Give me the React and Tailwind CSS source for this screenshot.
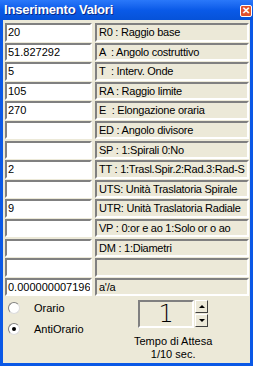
import React from 'react';

const rows = [
  ['20', 'R0 : Raggio base'],
  ['51.827292', 'A  : Angolo costruttivo'],
  ['5', 'T  : Interv. Onde'],
  ['105', 'RA : Raggio limite'],
  ['270', 'E  : Elongazione oraria'],
  ['', 'ED : Angolo divisore'],
  ['', 'SP : 1:Spirali 0:No'],
  ['2', 'TT : 1:Trasl.Spir.2:Rad.3:Rad-S'],
  ['', 'UTS: Unità Traslatoria Spirale'],
  ['9', 'UTR: Unità Traslatoria Radiale'],
  ['', 'VP : 0:or e ao 1:Solo or o ao'],
  ['', 'DM : 1:Diametri'],
  ['', ''],
  ['0.000000007196', "a'/a"],
];

const sunken =
  'border-2 border-t-[#808080] border-l-[#808080] border-b-white border-r-white';

function Radio({ checked, label }) {
  return (
    <div className="flex items-center h-[21px]">
      <span className="w-[12px] h-[12px] rounded-full bg-white border border-t-[#808080] border-l-[#808080] border-b-[#dcdcdc] border-r-[#dcdcdc] flex items-center justify-center">
        {checked && <span className="w-[4px] h-[4px] rounded-full bg-black" />}
      </span>
      <span className="ml-[14px]">{label}</span>
    </div>
  );
}

export default function App() {
  return (
    <div
      className="w-[253px] h-[366px] flex flex-col bg-[#0a58e6] text-[11px] text-black"
      style={{ fontFamily: '"Liberation Sans", Arial, sans-serif' }}
    >
      {/* title bar */}
      <div className="h-[20px] flex items-center justify-between pl-[4px] pr-[1px] bg-gradient-to-b from-[#2a78fa] via-[#0a5ae8] to-[#0652d8]">
        <span className="text-white font-bold text-[13px] tracking-[-0.2px] [text-shadow:1px_1px_0_#0a2a8a]">
          Inserimento Valori
        </span>
        <span className="w-[12px] h-[12px] mt-[2px] rounded-[2px] border border-white bg-[#e0502a] flex items-center justify-center text-white text-[10px] font-bold leading-none">
          ✕
        </span>
      </div>

      {/* body */}
      <div className="flex-1 mx-[3px] mb-[3px] bg-[#ece9d8] pt-[3px] pl-[2px] pr-[1px] flex flex-col">
        {rows.map(([val, label], i) => (
          <div key={i} className="flex h-[19.6px] gap-[3px]">
            <div className={`w-[87px] h-[18.5px] bg-white ${sunken} pl-[1px] flex items-center overflow-hidden whitespace-nowrap`}>
              {val}
            </div>
            <div className={`flex-1 h-[18.5px] ${sunken} pl-[2px] flex items-center overflow-hidden whitespace-pre tracking-[-0.25px]`}>
              {label}
            </div>
          </div>
        ))}

        <div className="flex">
          <div className="w-[120px] pl-[3px] flex flex-col">
            <Radio checked={false} label="Orario" />
            <Radio checked label="AntiOrario" />
          </div>
          <div className="flex flex-col items-center ml-[9px] mt-[3px]">
            <div className="flex">
              <div className={`w-[56px] h-[28px] ${sunken} flex items-center justify-center text-[24px] font-extralight leading-none`} style={{ fontFamily: '"DejaVu Sans", sans-serif' }}>
                1
              </div>
              <div className="flex flex-col gap-[1px] ml-[1px]">
                <div className="w-[13px] h-[13px] border border-t-white border-l-white border-b-[#404040] border-r-[#404040] bg-[#ece9d8] flex items-center justify-center">
                  <span className="w-0 h-0 border-l-[3px] border-r-[3px] border-b-[3px] border-l-transparent border-r-transparent border-b-black" />
                </div>
                <div className="w-[13px] h-[13px] border border-t-white border-l-white border-b-[#404040] border-r-[#404040] bg-[#ece9d8] flex items-center justify-center">
                  <span className="w-0 h-0 border-l-[3px] border-r-[3px] border-t-[3px] border-l-transparent border-r-transparent border-t-black" />
                </div>
              </div>
            </div>
            <div className="mt-[7px] text-center leading-[13px]">
              Tempo di Attesa
              <br />
              1/10 sec.
            </div>
          </div>
        </div>
      </div>
    </div>
  );
}
